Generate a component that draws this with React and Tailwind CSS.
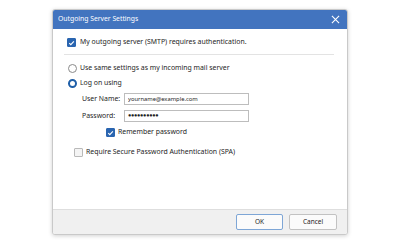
import React, { useState } from 'react';

const Check = ({ checked, onChange }) => (
  <button
    type="button"
    onClick={onChange}
    className={
      'w-[9px] h-[9px] shrink-0 flex items-center justify-center rounded-[1px] border ' +
      (checked ? 'bg-[#2a65b0] border-[#2a65b0]' : 'bg-[#f4f4f4] border-[#b9b9b9]')
    }
  >
    {checked && (
      <svg viewBox="0 0 10 10" className="w-[8px] h-[8px]">
        <path d="M1.8 5.2 L4 7.4 L8.4 2.6" fill="none" stroke="white" strokeWidth="1.6" />
      </svg>
    )}
  </button>
);

const Radio = ({ checked, onChange }) => (
  <button
    type="button"
    onClick={onChange}
    className={
      'w-[9px] h-[9px] shrink-0 rounded-full flex items-center justify-center border ' +
      (checked ? 'border-[#1f5fa8] border-[2.5px] bg-white' : 'border-[#8a8a8a] bg-white')
    }
  />
);

export default function App() {
  const [auth, setAuth] = useState(true);
  const [mode, setMode] = useState('logon');
  const [remember, setRemember] = useState(true);
  const [spa, setSpa] = useState(false);
  const [user, setUser] = useState('yourname@example.com');

  return (
    <div
      className="w-[400px] h-[250px] bg-white pt-[9px] pl-[52px] text-[#1e1e1e]"
      style={{ fontFamily: '"Noto Sans", "Open Sans", sans-serif' }}
    >
      <div className="w-[296px] h-[226px] flex flex-col rounded-[3px] border border-[#c9c9c9] bg-white shadow-[0_1px_4px_rgba(0,0,0,0.18)] overflow-hidden">
        <div className="h-[19px] shrink-0 flex items-center justify-between bg-[#4274bf] pl-[5px] pr-[7px]">
          <span className="text-white text-[6.8px] leading-none">Outgoing Server Settings</span>
          <svg viewBox="0 0 10 10" className="w-[9px] h-[9px]">
            <path d="M1 1 L9 9 M9 1 L1 9" stroke="white" strokeWidth="1.2" />
          </svg>
        </div>

        <div className="flex-1 flex flex-col text-[6.9px] leading-none whitespace-nowrap">
          <div className="flex items-center gap-[4px] ml-[14px] mt-[9px]">
            <Check checked={auth} onChange={() => setAuth(!auth)} />
            <span>My outgoing server (SMTP) requires authentication.</span>
          </div>

          <div className="h-px bg-[#e3e3e3] ml-[11px] mr-[13px] mt-[7px]" />

          <div className="flex items-center gap-[3px] ml-[15px] mt-[9px]">
            <Radio checked={mode === 'same'} onChange={() => setMode('same')} />
            <span>Use same settings as my incoming mail server</span>
          </div>

          <div className="flex items-center gap-[3px] ml-[15px] mt-[6px]">
            <Radio checked={mode === 'logon'} onChange={() => setMode('logon')} />
            <span>Log on using</span>
          </div>

          <div className="flex items-center ml-[29px] mt-[5px]">
            <span className="w-[42px] shrink-0">User Name:</span>
            <input
              value={user}
              onChange={(e) => setUser(e.target.value)}
              className="w-[125px] h-[12px] border border-[#bdbdbd] px-[3px] text-[5.8px] outline-none"
            />
          </div>

          <div className="flex items-center ml-[29px] mt-[5px]">
            <span className="w-[42px] shrink-0">Password:</span>
            <div className="w-[125px] h-[12px] border border-[#bdbdbd] px-[3px] flex items-center text-[5.5px] tracking-[-0.3px]">
              ●●●●●●●●●●
            </div>
          </div>

          <div className="flex items-center gap-[3px] ml-[53px] mt-[6px]">
            <Check checked={remember} onChange={() => setRemember(!remember)} />
            <span>Remember password</span>
          </div>

          <div className="flex items-center gap-[3px] ml-[21px] mt-[11px]">
            <Check checked={spa} onChange={() => setSpa(!spa)} />
            <span>Require Secure Password Authentication (SPA)</span>
          </div>
        </div>

        <div className="h-[25px] shrink-0 flex items-center justify-end gap-[6px] pr-[10px] bg-[#f0f0f0] border-t border-[#dedede]">
          <button className="w-[47px] h-[16px] border border-[#7ea6d6] bg-[#fbfbfb] rounded-[2px] text-[6.5px] leading-none">
            OK
          </button>
          <button className="w-[48px] h-[16px] border border-[#c2c2c2] bg-[#fbfbfb] rounded-[2px] text-[6.5px] leading-none">
            Cancel
          </button>
        </div>
      </div>
    </div>
  );
}
